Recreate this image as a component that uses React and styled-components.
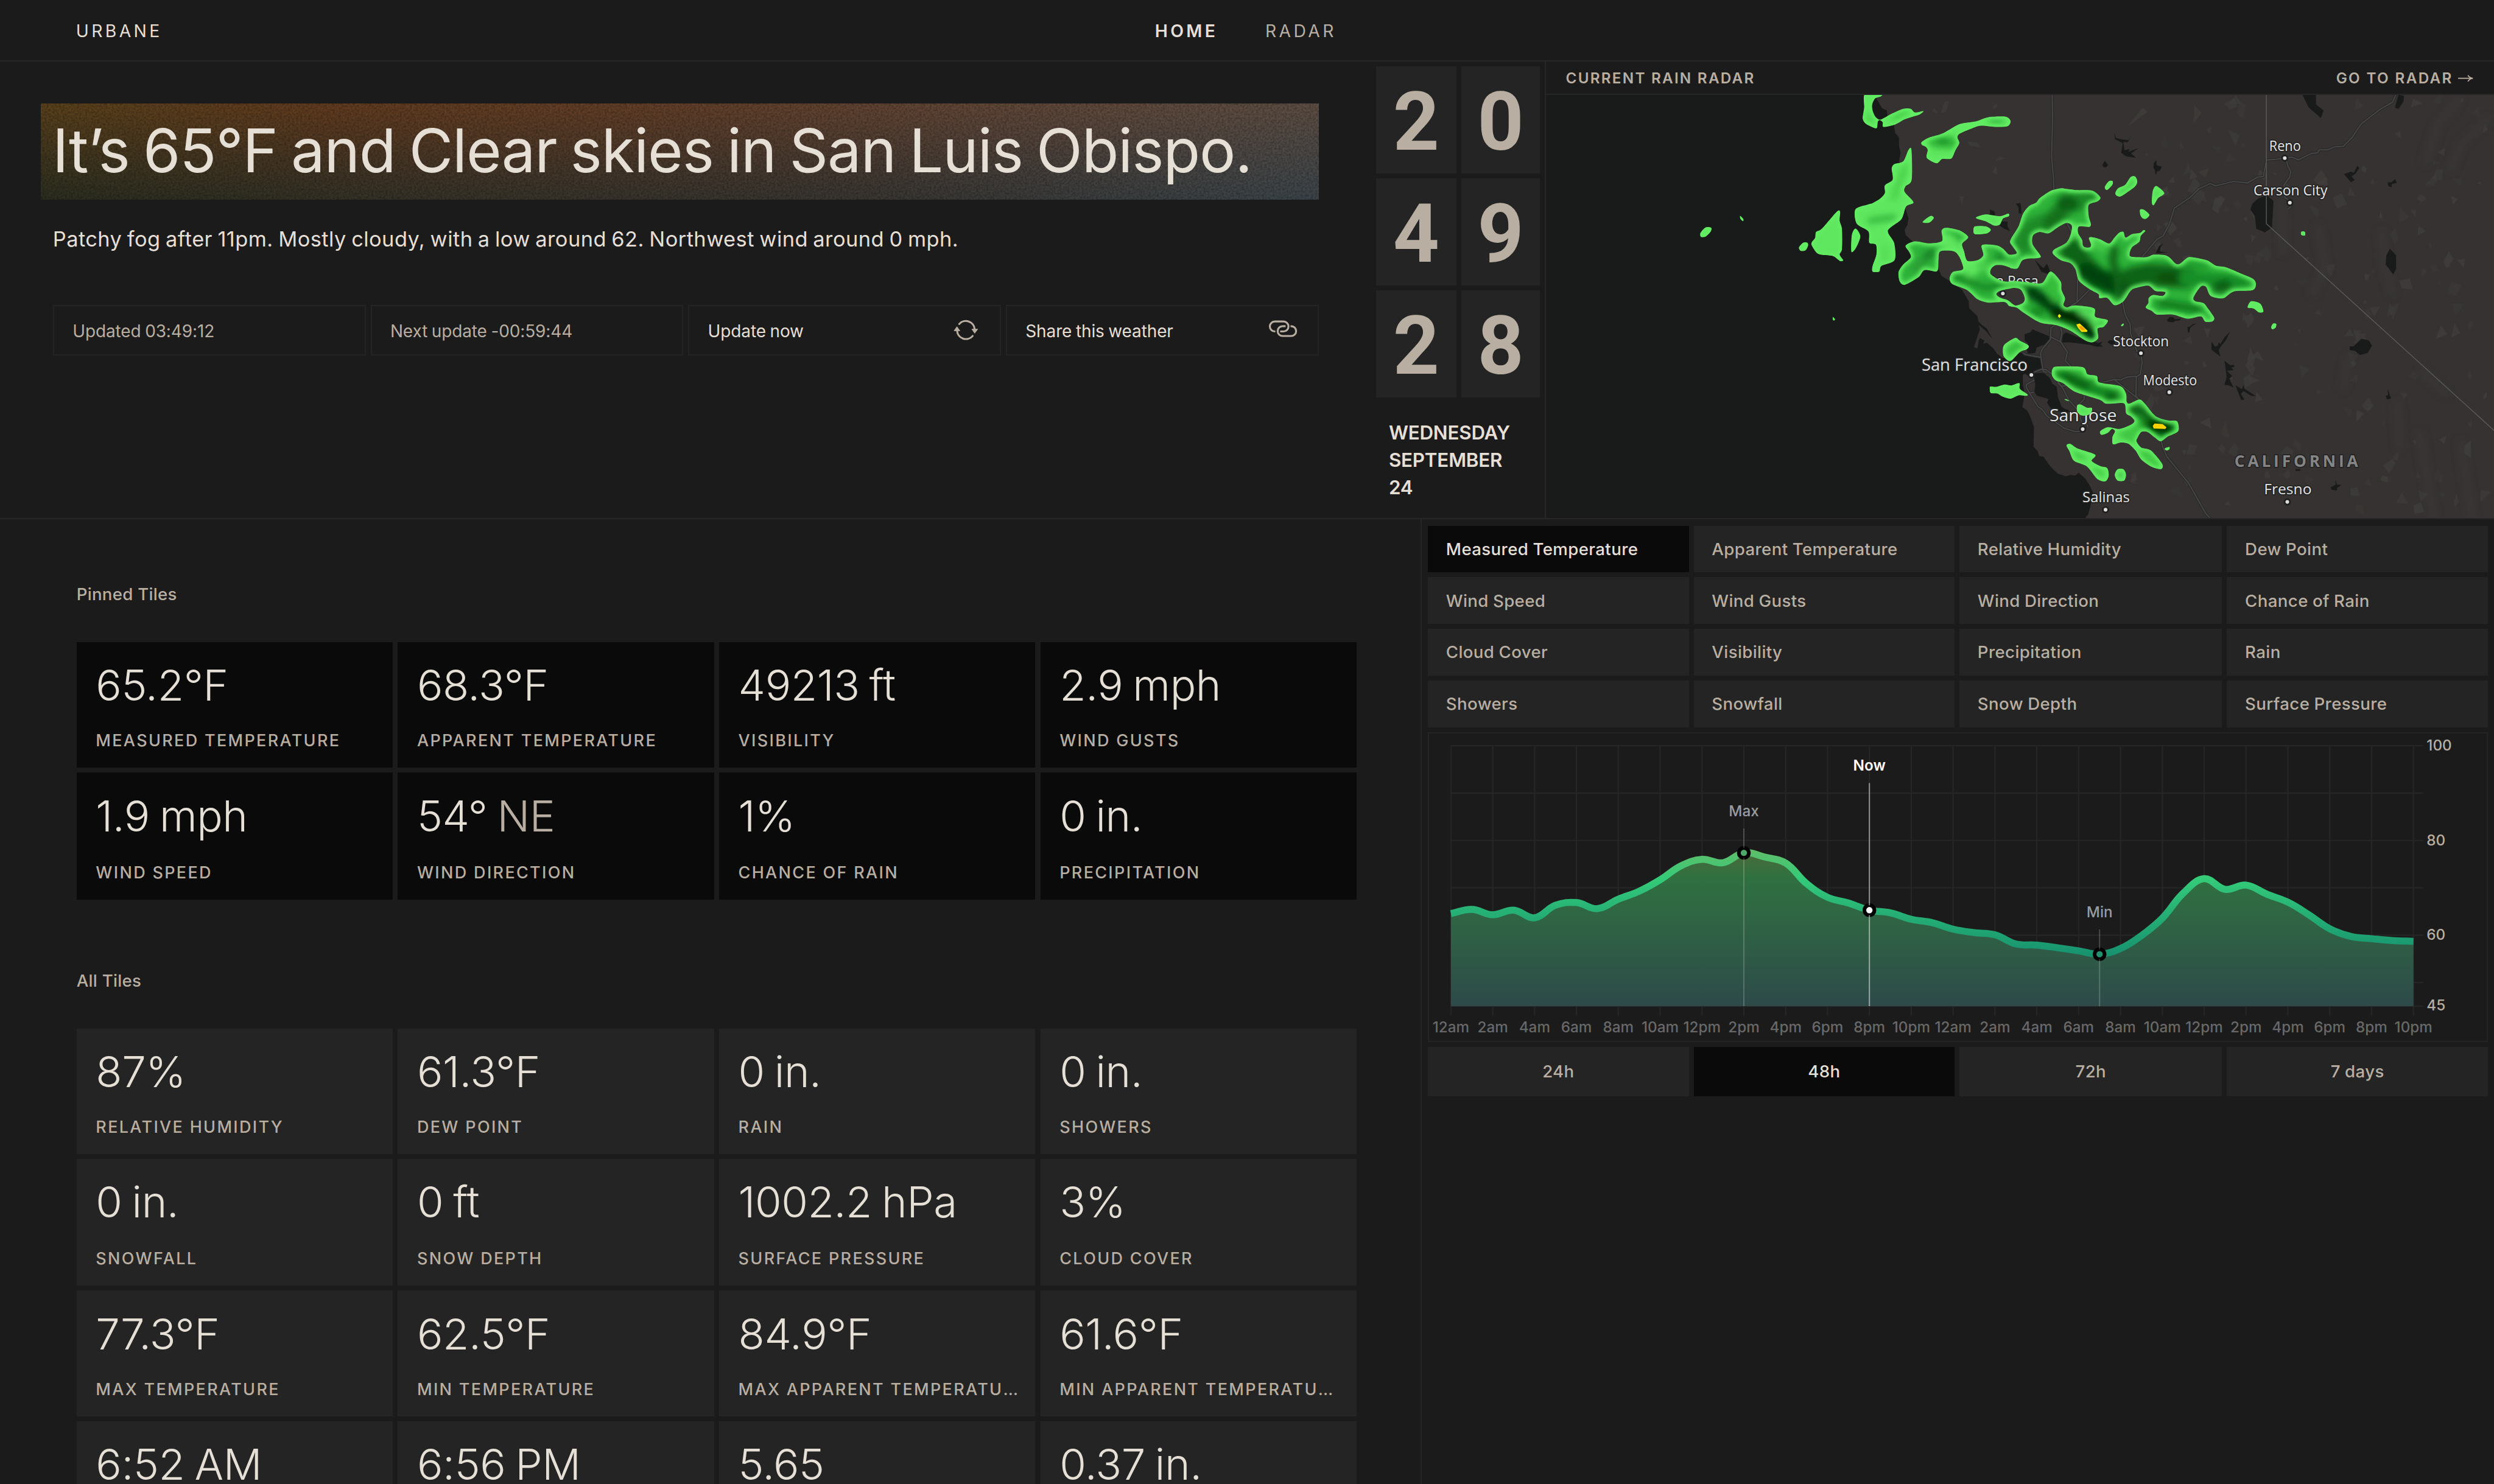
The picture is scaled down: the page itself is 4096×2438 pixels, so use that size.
import React from "react";
import styled, { createGlobalStyle } from "styled-components";

/* The design is drawn on a 6078px wide board; u() converts board units to page pixels. */
const u = (n) => `${Math.round(n * 0.673906 * 100) / 100}px`;

const color = {
  bg: "#1b1b1b",
  panel: "#242424",
  line: "#262626",
  ink: "#0a0a0a",
  text: "#e5dfd6",
  muted: "#b8aea1",
};

const GlobalStyle = createGlobalStyle`
  * { box-sizing: border-box; }
  html, body { margin: 0; background: ${color.bg}; }
  body {
    font-family: Inter, "Liberation Sans", sans-serif;
    color: ${color.text};
    overflow: hidden;
    -webkit-font-smoothing: antialiased;
  }
`;

const Page = styled.div`
  display: flex;
  flex-direction: column;
  height: 100vh;
  overflow: hidden;
  background: ${color.bg};
`;

/* ---------- Top bar ---------- */

const TopBar = styled.header`
  flex: none;
  height: ${u(150)};
  border-bottom: ${u(3.2)} solid ${color.line};
  padding: ${u(3)} 0 0 ${u(185)};
`;

const TopBarInner = styled.div`
  width: ${u(3072)};
  height: 100%;
  display: flex;
  align-items: center;
  justify-content: space-between;
`;

const Brand = styled.span`
  font-size: ${u(42)};
  letter-spacing: 0.156em;
`;

const Nav = styled.nav`
  display: flex;
  gap: ${u(115)};
`;

const NavLink = styled.a`
  font-size: ${u(42)};
  font-weight: ${(p) => (p.$active ? 600 : 400)};
  letter-spacing: 0.156em;
  color: ${(p) => (p.$active ? color.text : color.muted)};
`;

/* ---------- Hero row ---------- */

const TopRow = styled.section`
  flex: none;
  height: ${u(1116)};
  display: grid;
  grid-template-columns: ${u(3353.6)} ${u(411.4)} 1fr;
  border-bottom: ${u(3.2)} solid ${color.line};
`;

const Hero = styled.div`
  padding: ${u(102)} 0 0 ${u(98.7)};
`;

const Banner = styled.div`
  position: relative;
  width: ${u(3114.8)};
  height: ${u(234.3)};
  display: flex;
  align-items: center;
  padding: 0 0 ${u(5)} ${u(29)};
  background: linear-gradient(90deg, #2c2e20, #37332a 35%, #393632 65%, #3c454b);
  &::before {
    content: "";
    position: absolute;
    inset: 0;
    background: linear-gradient(90deg, #57401c, #603b1f 22%, #613e28 48%, #5f4638 75%, #5c4d43);
    mask-image: linear-gradient(180deg, #000 5%, rgba(0, 0, 0, 0.45) 55%, transparent);
  }
`;

const Grain = styled.svg`
  position: absolute;
  inset: 0;
  width: 100%;
  height: 100%;
  opacity: 0.36;
`;

const Title = styled.h1`
  position: relative;
  margin: 0;
  font-size: ${u(147)};
  font-weight: 400;
  line-height: 1.2;
  letter-spacing: -0.0105em;
  word-spacing: -0.048em;
  white-space: nowrap;
`;

const Summary = styled.p`
  margin: ${u(67)} 0 0 ${u(30)};
  font-size: ${u(51)};
  line-height: ${u(60)};
  letter-spacing: 0.0135em;
  word-spacing: -0.05em;
`;

const ActionRow = styled.div`
  width: ${u(3084.5)};
  margin: ${u(130.5)} 0 0 ${u(30.3)};
  display: grid;
  grid-template-columns: repeat(4, 1fr);
  gap: ${u(12)};
`;

const Action = styled.div`
  height: ${u(123)};
  border: ${u(3.2)} solid #242424;
  display: flex;
  align-items: center;
  justify-content: space-between;
  padding: ${u(3)} ${u(36)} 0 ${u(45)};
  font-size: ${u(41.5)};
  letter-spacing: -0.004em;
  word-spacing: -0.04em;
  color: ${(p) => (p.$clickable ? color.text : color.muted)};
  svg {
    flex: none;
    margin-top: ${u(-4)};
  }
`;

/* ---------- Clock ---------- */

const ClockColumn = styled.div`
  padding-top: ${u(11.7)};
`;

const ClockGrid = styled.div`
  display: grid;
  grid-template-columns: ${u(195.4)} ${u(192)};
  grid-auto-rows: ${u(261)};
  gap: ${u(12.1)};
`;

const Digit = styled.div`
  display: flex;
  align-items: center;
  justify-content: center;
  padding-top: ${u(13)};
  background: ${color.panel};
  color: ${color.muted};
  font-family: Roboto, Inter, sans-serif;
  font-weight: 700;
  font-size: ${u(197)};
  line-height: 1;
`;

const DateBlock = styled.div`
  margin: ${u(53.5)} 0 0 ${u(31)};
  font-size: ${u(46.5)};
  font-weight: 600;
  line-height: ${u(66.5)};
  letter-spacing: -0.006em;
`;

/* ---------- Radar panel ---------- */

const RadarPanel = styled.div`
  border-left: ${u(3.2)} solid ${color.line};
  display: flex;
  flex-direction: column;
  min-width: 0;
`;

const RadarHead = styled.div`
  flex: none;
  height: ${u(81)};
  border-bottom: ${u(3.2)} solid ${color.line};
  display: flex;
  align-items: center;
  justify-content: space-between;
  padding: ${u(3)} ${u(51)} 0 ${u(48)};
  font-size: ${u(36)};
  font-weight: 600;
  color: ${color.muted};
`;

const RadarHeading = styled.span`
  letter-spacing: 0.092em;
`;

const RadarLink = styled.a`
  display: flex;
  align-items: center;
  gap: ${u(12)};
  letter-spacing: 0.096em;
`;

const MapCanvas = styled.svg`
  display: block;
  width: 100%;
  flex: 1;
  min-height: 0;
  background: #191b1a;
`;

/* ---------- Lower area ---------- */

const LowerRow = styled.section`
  flex: 1;
  min-height: 0;
  display: grid;
  grid-template-columns: ${u(3462.5)} 1fr;
`;

const TilesColumn = styled.div`
  padding: ${u(153)} 0 0 ${u(186.5)};
  overflow: hidden;
`;

const SectionLabel = styled.h2`
  margin: ${(p) => (p.$spaced ? u(168) : 0)} 0 ${u(86.7)} 0;
  font-size: ${u(41)};
  font-weight: 500;
  line-height: ${u(60)};
  letter-spacing: 0.01em;
  color: ${color.muted};
`;

const TileGrid = styled.div`
  width: ${u(3119.8)};
  display: grid;
  grid-template-columns: repeat(4, 1fr);
  grid-template-rows: ${u(306)} ${u(309)};
  grid-auto-rows: ${u(306)};
  gap: ${u(12)};
`;

const Tile = styled.div`
  min-width: 0;
  display: flex;
  flex-direction: column;
  justify-content: space-between;
  padding: ${u(45)} ${u(42)} ${u(40.5)} ${u(47)};
  background: ${(p) => (p.$pinned ? color.ink : color.panel)};
`;

const TileValue = styled.div`
  font-size: ${u(105)};
  font-weight: 350;
  line-height: ${u(120)};
  letter-spacing: -0.006em;
  word-spacing: -0.05em;
  white-space: nowrap;
`;

const TileSuffix = styled.span`
  color: ${color.muted};
`;

const TileLabel = styled.div`
  font-size: ${u(40)};
  font-weight: 500;
  line-height: ${u(50)};
  letter-spacing: 0.087em;
  text-transform: uppercase;
  color: ${color.muted};
  white-space: nowrap;
  overflow: hidden;
  text-overflow: ellipsis;
`;

/* ---------- Chart column ---------- */

const ChartColumn = styled.div`
  border-left: ${u(3.2)} solid ${color.line};
  padding: ${u(15.4)} ${u(15)} 0 ${u(14.5)};
  display: flex;
  flex-direction: column;
  gap: ${u(12)};
`;

const TabGrid = styled.div`
  display: grid;
  grid-template-columns: 636fr 636fr 640fr 636fr;
  grid-auto-rows: ${(p) => u(p.$row)};
  gap: ${u(12)};
`;

const Tab = styled.button`
  border: 0;
  margin: 0;
  font-family: inherit;
  display: flex;
  align-items: center;
  justify-content: ${(p) => (p.$centered ? "center" : "flex-start")};
  padding: 0 ${(p) => (p.$centered ? 0 : u(44))} ${u(1)};
  font-size: ${u(41)};
  font-weight: 500;
  letter-spacing: 0.014em;
  word-spacing: -0.02em;
  background: ${(p) => (p.$active ? color.ink : color.panel)};
  color: ${(p) => (p.$active ? color.text : color.muted)};
`;

const ChartFrame = styled.div`
  height: ${u(755)};
  border: ${u(3.2)} solid ${color.panel};
`;

const ChartSvg = styled.svg`
  display: block;
  width: 100%;
  height: 100%;
`;

const AxisText = styled.text`
  font-size: ${(p) => p.$size || 36}px;
  font-weight: ${(p) => p.$weight || 500};
  fill: ${(p) => p.$fill};
  text-anchor: ${(p) => p.$anchor || "middle"};
`;

const CityText = styled.text`
  font-family: "Open Sans", "Noto Sans", sans-serif;
  font-size: ${(p) => p.$size || 34}px;
  font-weight: 400;
  fill: #e4e4e4;
  stroke: #232323;
  stroke-width: 5px;
  stroke-linejoin: round;
  paint-order: stroke;
`;

const StateText = styled(CityText)`
  font-weight: 700;
  fill: #858585;
`;

/* ---------- Icons ---------- */

const RefreshIcon = () => (
  <svg width={u(90)} height={u(90)} viewBox="0 0 270 270" fill="none">
    <g stroke={color.muted} strokeWidth="14" strokeLinecap="round">
      <path d="M82 90A65 65 0 0 1 195 130" />
      <path d="M180 178A65 65 0 0 1 66 138" />
    </g>
    <g fill={color.muted} stroke={color.muted} strokeWidth="4" strokeLinejoin="round">
      <path d="M174 128H217L195 158Z" />
      <path d="M44 140H87L65 110Z" />
    </g>
  </svg>
);

const LinkIcon = () => (
  <svg width={u(95)} height={u(95)} viewBox="0 0 285 285" fill="none">
    <g stroke={color.muted} strokeWidth="14">
      <path d="M87 153.500H83A36.250 36.250 0 0 1 83 81H147A36.250 36.250 0 0 1 147 153.500H122" />
      <path d="M162 115H140A36 36 0 0 0 140 187H203A36 36 0 0 0 203 115H198" />
    </g>
  </svg>
);

const ArrowIcon = () => (
  <svg width={u(37)} height={u(20)} viewBox="0 0 37 20" fill="none" stroke={color.muted} strokeWidth="2.600">
    <path d="M0 10H35M24 2.500C26.500 6.500 30 9 36 10C30 11 26.500 13.500 24 17.500" />
  </svg>
);

/* ---------- Map geometry ---------- */

/* Survey sheets: each sheet has its own origin and scale on the board. */
const sheet = (ox, oy, sx, sy) => (s) =>
  s.trim().split(/\s+/).map((p) => {
    const [x, y] = p.split(",").map(Number);
    return [ox + x / sx, oy + y / sy];
  });
const W = sheet(4300, 200, 1.7422, 1.4519);
const E = sheet(5100, 150, 1.6033, 1.3876);
const C = sheet(4850, 400, 2.3059, 2.3059);
const S = sheet(3300, 0, 1.12, 1.2062);

const f = (n) => n.toFixed(1);
const line = (pts) => "M" + pts.map((p) => `${f(p[0])} ${f(p[1])}`).join("L");
const shape = (pts) => line(pts) + "Z";
const smooth = (pts) => {
  const n = pts.length;
  const k = 0.14;
  let d = `M${f(pts[0][0])} ${f(pts[0][1])}`;
  for (let i = 0; i < n; i++) {
    const a = pts[(i - 1 + n) % n];
    const b = pts[i];
    const c = pts[(i + 1) % n];
    const e = pts[(i + 2) % n];
    d += `C${f(b[0] + (c[0] - a[0]) * k)} ${f(b[1] + (c[1] - a[1]) * k)} ${f(c[0] - (e[0] - b[0]) * k)} ${f(c[1] - (e[1] - b[1]) * k)} ${f(c[0])} ${f(c[1])}`;
  }
  return d + "Z";
};

const LAND = shape([
  ...W("475,40 478,60 500,92 520,100 525,125 550,150 556,180 572,195 572,225 579,250 572,280 590,320 600,450 612,480 608,505 596,522 600,540 628,562 700,600 740,660 752,685 790,705 840,735 868,775 870,800 905,828 915,875 890,938 905,942 912,910 930,925 945,922 970,940 990,962 1010,975 1040,978 1085,985 1120,1030 1098,1035 1098,1070 1106,1100 1096,1150 1114,1160 1125,1175 1145,1220 1143,1290 1160,1305 1168,1323 1185,1325 1215,1360 1245,1385 1280,1395 1300,1390 1320,1392 1335,1382 1362,1402 1380,1425 1397,1455 1385,1500 1375,1530 1360,1545 1320,1560"),
  [6100, 1290], [6100, 200],
]);

const WATER = [
  C("195,955 225,945 240,928 265,940 330,965 340,985 310,1012 262,1030 255,1060 215,1065 205,1040 215,1010 195,990"),
  C("175,1060 230,1072 280,1085 290,1110 302,1155 260,1170 240,1185 205,1185 190,1140 165,1105 120,1100 110,1060"),
  C("252,1175 300,1172 335,1200 352,1235 375,1250 382,1310 402,1360 420,1375 445,1382 440,1395 400,1392 345,1375 320,1340 330,1320 262,1300 250,1280 255,1240 248,1210"),
  C("410,960 425,945 455,955 500,975 560,990 610,1005 635,995 620,1012 635,1025 600,1025 560,1015 480,1005 440,1000 405,1002"),
  C("660,1000 672,988 700,992 705,1010 680,1015"),
  C("145,222 172,218 178,278 162,275 160,240"),
  C("0,255 25,265 30,285 0,290"),
  C("60,320 100,322 98,345 112,375 80,362 55,345"),
  C("252,538 300,585 320,560 338,600 325,615 290,605"),
  C("632,5 645,0 665,5 650,18"),
  C("922,0 935,15 965,15 955,35 938,40 930,58 928,35 918,15"),
  C("932,500 950,460 975,445 960,465 955,490 1000,496 950,500"),
  C("995,875 1010,858 1030,860 1040,872 1075,868 1065,878 1040,880 1030,888 1000,885"),
  C("1110,915 1125,912 1140,898 1162,895 1140,905 1125,920 1120,948 1112,942"),
  C("1245,998 1265,1025 1282,1018 1285,1000 1295,1010 1320,970 1350,940 1325,990 1300,1020 1285,1045 1296,1082 1245,1042"),
  C("1318,1105 1350,1130 1370,1128 1375,1138 1355,1142 1370,1158 1330,1160 1362,1190 1345,1205 1368,1255 1345,1243 1318,1240 1330,1195 1325,1155"),
  C("1380,1242 1415,1265 1425,1240 1430,1262 1495,1302 1470,1302 1425,1275 1410,1290 1430,1322 1412,1326"),
  W("905,843 925,860 945,872 968,908 940,880 912,860"),
  W("915,905 935,915 930,925 908,925"),
  E("648,462 680,452 707,470 705,500 701,560 674,578 640,565 634,522 617,500 625,480"),
  E("820,112 873,112 873,145 903,165 892,190 845,155"),
  E("1195,112 1217,115 1215,135 1195,160 1182,155"),
  E("1162,632 1186,655 1186,700 1175,720 1145,685 1148,655"),
  E("1005,963 1020,963 1050,937 1080,943 1092,960 1075,985 1045,992 1025,978 1005,975"),
  E("982,380 1010,372 1020,376 1035,352 1042,360 1028,378 1012,388 1024,400 1010,408 990,388"),
  E("1153,408 1168,408 1182,397 1189,410 1170,413 1168,425 1155,420"),
  E("1145,1130 1155,1128 1153,1105 1166,1140 1150,1142"),
  E("85,240 92,258 110,262 140,265 150,250 138,272 120,272 125,300 145,295 140,305 180,292 150,310 170,325 130,320 112,308 118,275 88,262"),
  E("38,350 48,335 60,348 45,358"),
  E("238,345 250,332 250,350 270,355 255,365 248,382 245,360"),
  E("930,1440 950,1430 948,1415 955,1430 972,1432 955,1442 955,1450 935,1448"),
  E("793,1378 812,1378 812,1384 793,1384"),
];

const ROADS = [
  W("1222,40 1224,120 1220,265 1228,340 1230,390"),
  C("430,325 455,375 460,395"),
  C("492,640 490,775 440,805"),
  C("562,702 490,775"),
  C("745,770 760,845 788,900 790,950 825,1050 848,1062 855,1115 845,1180 822,1195 820,1305 845,1330"),
  C("822,1192 770,1196 735,1212 700,1210 640,1224"),
  C("700,1212 838,1322"),
  C("360,908 343,920 340,985 295,1038 284,1062 290,1105 300,1165 320,1170"),
  C("185,1060 200,1070 285,1085"),
  C("398,920 405,948 395,995 435,1055 424,1105 462,1145"),
  C("340,970 395,997"),
  C("245,1170 290,1152 315,1155 350,1180 410,1260 440,1320 500,1390 515,1450 520,1475"),
  C("380,1230 400,1246 430,1245"),
  C("250,1212 205,1238 205,1255 225,1290 270,1362 295,1380 320,1415 420,1485 480,1503 510,1500"),
  C("225,1285 248,1282"),
  C("530,1300 530,1320 500,1350"),
  C("528,1420 552,1480"),
  E("192,662 252,600 275,590 300,550 320,495 380,460 415,430 460,412 480,420 550,405 605,410 645,390 668,388 672,365 680,332 720,330 750,325 780,323 805,332 855,310 880,308 885,298 920,298 945,288 980,286 1015,255 1050,210 1125,160 1172,137 1187,108"),
  E("757,330 762,350 775,372 770,390 748,418 752,460 772,470 775,490 765,498"),
  E("266,1275 275,1305 290,1335 375,1425 440,1525 465,1550"),
];

const CELLS = [
  {
    outer: [
      ...W("600,578 640,563 700,570 755,562 753,525 772,515 828,524 866,548 840,572 848,598 862,632 905,630 930,612 922,580 940,574 990,578 1015,590 1040,610 1072,605 1058,585"),
      ...C("113,440 120,415 160,350 185,280 220,235 260,215 280,190 340,150 400,135 430,138 490,145 575,148 620,185 605,208 555,228 555,290 567,335 558,352 500,350 495,385 518,425 522,455 535,467 562,467 568,450 556,415 575,410 620,422 670,445 700,412 725,385 750,380 762,412 800,392 845,385 862,370 873,375 848,402 840,435 800,465 785,500 795,520 880,522 920,508 980,510 1010,525 1045,560 1070,558 1110,525 1140,523 1220,540 1270,570 1330,580 1420,618 1480,645 1495,675 1475,708 1370,715 1310,753 1240,740 1215,690 1190,684 1165,712 1143,752 1155,770 1200,780 1225,810 1260,862 1250,883 1210,885 1185,855 1110,868 1030,845 940,845 910,825 875,805 890,780 892,752 915,735 970,740 985,718 930,712 890,682 820,695 790,712 750,770 700,792 660,752 615,752 610,730 560,702 500,655 480,590 450,555 400,540 355,505 360,480 430,440 455,390 460,345 430,330 380,355 330,388 280,380 242,400 240,450 285,515 270,527 215,530 180,542 155,585 120,585"),
      ...W("1040,655 1015,648 980,648 962,662 962,680 1000,700 1030,706 1060,703 1120,708 1180,710 1215,670 1258,705 1262,735 1277,765 1270,788 1285,797 1320,790 1400,800 1405,830 1458,842 1442,865 1415,872 1418,905 1395,920 1365,915 1300,880 1240,860 1170,850 1100,815 1072,798 1040,792 1020,778 950,780 905,768 860,735 800,715 787,695 800,672 838,665 845,655 830,620 805,598 748,598 740,625 738,660 728,670 680,665 655,690 597,717 575,705 570,672 590,645 622,620 615,600"),
    ],
    hole: W("985,750 1002,738 1060,728 1090,735 1106,765 1097,782 1065,790 1035,772 1000,762"),
    tone: "#2fb33a",
    edge: 13,
    cores: [
      [C("190,450 200,400 250,350 340,320 430,230 580,185"), 46, "#1a8a26"],
      [C("330,330 400,270 430,200"), 30, "#13701c"],
      [C("415,215 460,222"), 34, "#0e5f15"],
      [C("455,480 520,560 600,640 720,680 800,640 900,620 1100,635"), 54, "#0d6417"],
      [C("540,600 620,640 720,690"), 42, "#04430a"],
      [C("700,480 690,540 720,640 725,740"), 20, "#0d6417"],
      [C("970,640 1100,640"), 26, "#095010"],
      [C("1100,640 1250,650 1420,665"), 34, "#178f27"],
      [C("1285,690 1325,680"), 30, "#0c6014"],
      [C("1080,560 1200,570"), 24, "#239f2e"],
      [C("960,780 1080,800 1170,815"), 20, "#117a1d"],
      [W("700,610 640,660"), 20, "#2a9c35"],
      [W("690,615 712,605"), 20, "#138026"],
      [W("995,618 1010,625"), 16, "#0f7a20"],
      [W("815,690 880,708 935,728 1000,720 1150,718"), 14, "#128424"],
      [W("770,560 830,610 880,660"), 40, "#5ee55d"],
      [W("930,600 930,660 1080,640"), 16, "#4ed24d"],
      [C("560,430 640,470"), 14, "#4fd54e"],
      [C("470,350 470,390"), 16, "#57de56"],
      [C("235,720 310,770 400,840 500,880 570,960"), 30, "#063e0a"],
      [C("370,840 500,860 560,930"), 22, "#022404"],
      [C("250,830 280,830"), 24, "#138a22"],
      [C("345,650 370,740"), 30, "#35bd3b"],
      [C("520,830 585,850 600,900"), 16, "#5fe75f"],
      [C("620,885 635,885"), 10, "#2ea838"],
    ],
  },
  {
    outer: [
      ...C("347,1170 352,1150 375,1137 520,1140 548,1180 600,1190 608,1222 640,1232 735,1248 765,1290 768,1335 785,1345 840,1322 870,1345 930,1415 1000,1440 1052,1445 1058,1500 1000,1530 960,1557 925,1535 885,1505 850,1505 828,1540"),
      ...E("172,1285 190,1305 228,1315 272,1360 268,1378 230,1370 190,1345 168,1315 140,1292 110,1288 80,1294 78,1270 88,1250 75,1242 60,1255 35,1262 30,1250 60,1236 105,1242 150,1228 164,1215 150,1200"),
      ...C("765,1400 755,1345 690,1345 650,1345 620,1325 540,1300 470,1275 410,1230 370,1215 350,1190"),
    ],
    tone: "#3cc440",
    edge: 13,
    cores: [
      [C("400,1185 540,1245 690,1305"), 34, "#178a24"],
      [C("430,1195 540,1245"), 20, "#0c6016"],
      [C("670,1300 700,1305"), 20, "#0c6016"],
      [C("810,1380 860,1392"), 26, "#0c6016"],
      [C("900,1440 960,1480 990,1490"), 44, "#0d7019"],
      [C("925,1465 985,1480"), 32, "#032d06"],
      [E("150,1250 140,1290 250,1350"), 12, "#4acc48"],
      [E("100,1270 80,1275"), 20, "#62e861"],
    ],
  },
  { outer: W("428,40 500,40 495,50 470,58 458,80 460,100 470,120 482,130 498,131 540,112 590,94 622,94 640,107 676,102 660,114 630,122 595,132 555,150 506,158 503,142 490,134 482,140 478,162 462,160 430,146 418,128 424,90"), cores: [[W("435,125 455,130"), 14, "#49cd49"], [W("550,125 600,108"), 12, "#3fc540"]] },
  { outer: W("668,212 700,196 760,180 830,148 900,138 950,124 1025,122 1046,138 1032,156 980,158 920,154 880,164 830,182 820,195 828,215 812,240 794,270 755,272 732,287 690,268 694,240 685,228 670,222"), cores: [[W("720,210 800,215"), 30, "#35bb3b"], [W("745,208 775,210"), 16, "#159028"], [W("960,138 1010,140"), 9, "#1d9a2e"]] },
  { outer: W("612,240 625,240 626,345 600,368 596,388 634,425 602,440 582,485 525,525 552,570 553,630 498,650 488,670 460,670 460,650 476,610 474,575 446,568 442,528 392,500 387,450 440,433 460,428 492,412 512,392 512,365 545,345 541,305 552,290 590,280"), cores: [[W("450,490 550,478"), 12, "#2fae38"], [W("550,410 575,350 600,300"), 14, "#48ce48"], [W("510,590 515,630"), 18, "#57dc55"]] },
  { outer: W("308,458 322,458 320,490 330,520 330,590 320,610 335,630 322,633 290,615 230,608 202,578 202,566 216,550 220,530 245,518"), cores: [] },
  { outer: W("147,585 165,568 183,568 186,578 175,595 155,597"), cores: [] },
  { outer: W("372,540 388,518 408,545 390,585 370,600"), cores: [] },
  { outer: W("291,831 300,838 298,843 292,842"), cores: [] },
  { outer: S("946,684 960,668 975,669 974,680 960,695 947,696"), cores: [] },
  { outer: S("1054,634 1063,644 1062,650 1055,643"), cores: [] },
  { outer: W("672,495 705,473 720,480 700,497"), cores: [] },
  { outer: W("898,480 940,468 1000,474 1036,465 1038,474 1014,482 1000,504 975,507 940,492"), cores: [[W("930,485 985,490"), 8, "#4fd34e"]] },
  { outer: W("888,525 895,510 940,510 962,522 945,535 895,538"), cores: [[W("905,525 930,522"), 8, "#4fd34e"]] },
  { outer: W("1013,950 1020,928 1065,905 1085,915 1122,932 1115,945 1085,955 1045,987 1018,972"), cores: [[W("1045,950 1080,930"), 30, "#38bd3c"]] },
  { outer: W("957,1085 960,1077 985,1078 1020,1070 1050,1073 1083,1065 1085,1085 1118,1105 1110,1110 1080,1108 1045,1120 1010,1112 990,1102 962,1100"), cores: [] },
  { outer: C("490,1355 510,1350 545,1368 573,1370 570,1395 550,1410 515,1412 490,1390"), cores: [[C("520,1385 545,1390"), 10, "#4bd04b"]] },
  { outer: W("1283,1285 1300,1280 1330,1296 1405,1318 1390,1340 1425,1358 1455,1365 1463,1390 1450,1412 1415,1405 1370,1360 1315,1340 1295,1305"), cores: [[W("1320,1315 1350,1330"), 14, "#41c542"], [W("1400,1375 1435,1385"), 14, "#41c542"]] },
  { outer: W("1488,1390 1500,1370 1525,1370 1536,1388 1528,1410 1500,1410"), cores: [[W("1508,1390 1516,1390"), 12, "#2aa336"]] },
  { outer: C("418,1322 430,1320 447,1332 430,1328"), cores: [] },
  { outer: E("815,575 830,575 830,588 815,586"), cores: [] },
  { outer: E("282,1308 300,1303 300,1311 290,1315 284,1313"), cores: [] },
  { outer: E("698,898 705,886 718,887 715,900 702,905"), cores: [] },
  { outer: E("111,892 120,885 122,890 115,895"), cores: [] },
  { outer: E("606,828 620,810 655,818 668,845 650,848 630,835 610,833"), cores: [] },
  { outer: C("645,128 668,95 690,95 688,115 658,145"), cores: [[C("655,130 680,105"), 6, "#35b93b"]] },
  { outer: C("705,160 720,135 760,115 790,72 815,68 828,95 815,125 760,165 730,182 710,175"), cores: [[C("735,155 775,130 805,95"), 12, "#35b93b"]] },
  { outer: C("935,122 980,162 945,190 920,230 910,215 915,150"), cores: [[C("930,150 928,190"), 10, "#45c845"]] },
  { outer: C("843,255 865,255 896,283 880,305 860,305 845,285"), cores: [] },
];

const HOT_SPOTS = [
  [C("485,900 505,895 548,935 545,942 515,942 495,920"), "#ffe000"],
  [C("500,912 512,908 534,928 530,934 514,933"), "#ff9a00"],
  [C("381,852 390,841 400,852 390,865"), "#f4f500"],
  [C("915,1470 925,1457 970,1460 992,1478 985,1488 920,1485"), "#ffd200"],
];

const CITIES = [
  ["Reno", 5530.4, 366.9, 77.3, 34, E("751,326")],
  ["Carson City", 5492.3, 476.5, 180.3, 34, E("771,477")],
  ["Stockton", 5150, 843.3, 136, 34, E("189,986")],
  ["Modesto", 5222.9, 939, 131.6, 34, E("300,1118")],
  ["Fresno", 5517.9, 1204.3, 116, 34, E("761,1489")],
  ["Salinas", 5075.4, 1224.2, 115.4, 34, W("1449,1513")],
  ["San Francisco", 4683.4, 902.5, 258.3, 40, W("1134,1036")],
  ["San Jose", 4995, 1025.8, 164, 40, W("1352,1228")],
  ["Santa Rosa", 4796, 696.7, 172, 34, W("1013,748")],
];

/* Deterministic scatter of faint hillside facets. */
const FACETS = (() => {
  let s = 7;
  const rnd = () => {
    s = (s * 16807) % 2147483647;
    return s / 2147483647;
  };
  const out = [];
  for (let i = 0; i < 190; i++) {
    const x = 5200 + rnd() * 860;
    const y = 240 + rnd() * 1010;
    const r = 6 + rnd() * 13;
    const n = rnd() > 0.5 ? 4 : 3;
    const a0 = rnd() * 6.28;
    const pts = [];
    for (let j = 0; j < n; j++) {
      const a = a0 + (j * 6.28) / n + rnd() * 0.7;
      const q = r * (0.5 + rnd() * 0.7);
      pts.push([x + Math.cos(a) * q, y + Math.sin(a) * q * 1.25]);
    }
    out.push([pts, 0.25 + rnd() * 0.6]);
  }
  return out;
})();

const RIDGES = [
  E("1300,340 1350,210 1430,130"),
  E("1400,360 1440,280 1540,200"),
  E("1130,580 1140,690 1170,780"),
  E("880,560 910,700 860,780"),
  E("740,480 745,640"),
  E("1290,1050 1380,1120"),
  E("1190,1160 1200,1300"),
  E("1280,1260 1330,1540"),
  E("1440,1290 1480,1540"),
  E("1000,1000 980,1100"),
];

const LAKES_AND_LAND = (
  <g>
    <path d={LAND} fill="#353231" />
    <g fill="none" stroke="#3a3937" strokeWidth="22" strokeLinecap="round" filter="url(#ridgeBlur)" opacity="0.6">
      {RIDGES.map((r, i) => <path key={i} d={line(r)} />)}
    </g>
    {FACETS.map(([pts, o], i) => <path key={i} d={shape(pts)} fill="#403e3c" opacity={o} />)}
    <g fill="#403e3c" opacity="0.7">
      <path d={shape(W("713,105 722,90 738,110"))} />
      <path d={shape(W("765,68 785,66 772,105 750,108"))} />
      <path d={shape(W("968,90 985,74 990,85 975,96"))} />
      <path d={shape(W("862,210 905,213 918,230 875,225"))} />
      <path d={shape(W("978,280 1000,262 1028,270 1000,275"))} />
      <path d={shape(W("968,318 985,295 990,328"))} />
      <path d={shape(W("830,405 848,405 839,433"))} />
      <path d={shape(E("133,222 195,155 215,170"))} />
    </g>
    <g fill="#191b1a">
      {WATER.map((w, i) => <path key={i} d={shape(w)} />)}
    </g>
  </g>
);

const RadarMap = () => (
  <MapCanvas viewBox="3768 231 2310 1032" preserveAspectRatio="none">
    <defs>
      <filter id="ridgeBlur" filterUnits="userSpaceOnUse" x="5000" y="200" width="1100" height="1100"><feGaussianBlur stdDeviation="8" /></filter>
      <filter id="coreBlur" filterUnits="userSpaceOnUse" x="4100" y="200" width="1500" height="1100"><feGaussianBlur stdDeviation="8" /></filter>
      <filter id="edgeBlur" filterUnits="userSpaceOnUse" x="4100" y="200" width="1500" height="1100"><feGaussianBlur stdDeviation="4.500" /></filter>
      {CELLS.map((c, i) => (
        <clipPath key={i} id={`cell${i}`}>
          <path clipRule="evenodd" d={smooth(c.outer) + (c.hole ? smooth(c.hole) : "")} />
        </clipPath>
      ))}
    </defs>
    {LAKES_AND_LAND}
    <g fill="none" strokeLinejoin="round">
      {ROADS.map((r, i) => <path key={i} d={line(r)} stroke="#292929" strokeWidth="6.500" />)}
      {ROADS.map((r, i) => <path key={i} d={line(r)} stroke="#474747" strokeWidth="2.800" />)}
      <path d={line(E("679,108 679,548 1575,1252"))} stroke="#5c5c5b" strokeWidth="2" />
    </g>
    {CITIES.map(([name, x, y, w, size, [dot]]) => (
      <g key={name}>
        <CityText x={x} y={y} $size={size} textLength={w} lengthAdjust="spacingAndGlyphs">{name}</CityText>
        <circle cx={dot[0]} cy={dot[1]} r="6.500" fill="#dcdcdc" stroke="#1e1e1e" strokeWidth="4" />
      </g>
    ))}
    <StateText $size={39} x="5446" y="1137.300" textLength="301" lengthAdjust="spacing">CALIFORNIA</StateText>
    {CELLS.map((c, i) => {
      const d = smooth(c.outer) + (c.hole ? smooth(c.hole) : "");
      return (
        <g key={i} clipPath={`url(#cell${i})`}>
          <path d={d} fillRule="evenodd" fill={c.tone || "#5fe75f"} />
          <g filter="url(#coreBlur)" fill="none" strokeLinecap="round" strokeLinejoin="round">
            {c.cores.map(([pts, w, fill], j) => <path key={j} d={line(pts)} stroke={fill} strokeWidth={w} />)}
          </g>
          <path d={d} fill="none" stroke="#63ee64" strokeWidth={c.edge || 10} filter="url(#edgeBlur)" />
        </g>
      );
    })}
    {HOT_SPOTS.map(([pts, fill], i) => <path key={i} d={shape(pts)} fill={fill} />)}
  </MapCanvas>
);

/* ---------- Chart ---------- */

const HOUR = 50.99;
const X0 = 3536.4;
const LEVELS = [
  1057, 1046, 1060, 1048, 1068, 1035, 1028, 1044, 1019, 998, 968, 931, 914, 923, 897, 908, 924, 978, 1014, 1029, 1048,
  1055, 1072, 1081, 1098, 1107, 1113, 1137, 1140, 1147, 1155, 1164, 1149, 1115, 1069, 1003, 965, 993, 982, 1006, 1027,
  1060, 1097, 1117, 1123, 1128, 1130,
].map((v) => 1250 + v / 1.0814);

const curve = (() => {
  const p = LEVELS.map((y, i) => [X0 + i * HOUR, y]);
  const cp = p.map((c, i) => {
    const a = p[Math.max(0, i - 1)];
    const b = p[Math.min(p.length - 1, i + 1)];
    const d1 = Math.hypot(c[0] - a[0], c[1] - a[1]);
    const d2 = Math.hypot(b[0] - c[0], b[1] - c[1]);
    const t = 0.4 / (d1 + d2);
    return {
      in: [c[0] - t * d1 * (b[0] - a[0]), c[1] - t * d1 * (b[1] - a[1])],
      out: [c[0] + t * d2 * (b[0] - a[0]), c[1] + t * d2 * (b[1] - a[1])],
    };
  });
  let d = `M${f(p[0][0])} ${f(p[0][1])}`;
  for (let i = 1; i < p.length; i++) {
    d += `C${f(cp[i - 1].out[0])} ${f(cp[i - 1].out[1])} ${f(cp[i].in[0])} ${f(cp[i].in[1])} ${f(p[i][0])} ${f(p[i][1])}`;
  }
  return d;
})();

const HOURS = ["12am", "2am", "4am", "6am", "8am", "10am", "12pm", "2pm", "4pm", "6pm", "8pm", "10pm"];
const ROWS = [1818.2, 1933.8, 2049.2, 2164.6, 2280, 2395.5, 2453];
const SCALE = [["100", 1829.8], ["80", 2061], ["60", 2291.3], ["45", 2463.3]];

const Marker = ({ hour, label, top, textY, lineColor, fill, textFill, weight }) => {
  const x = X0 + hour * HOUR;
  return (
    <g>
      <AxisText x={x} y={textY} $fill={textFill} $weight={weight}>{label}</AxisText>
      <circle cx={x} cy={LEVELS[hour]} r="12.200" fill={fill} stroke="#000" strokeWidth="9" />
      <line x1={x} x2={x} y1={top} y2={LEVELS[hour] - 12} stroke={lineColor} strokeWidth="3" />
      <line x1={x} x2={x} y1={LEVELS[hour] + 12} y2="2453" stroke={lineColor} strokeWidth="3" />
    </g>
  );
};

const TemperatureChart = () => (
  <ChartSvg viewBox="3483.200 1788.600 2576.800 748.600" preserveAspectRatio="none">
    <defs>
      <linearGradient id="tempLine" gradientUnits="userSpaceOnUse" x1="0" x2="0" y1="2072" y2="2330">
        <stop offset="0" stopColor="#60bd69" />
        <stop offset="0.270" stopColor="#34cb79" />
        <stop offset="0.600" stopColor="#26b075" />
        <stop offset="1" stopColor="#17926f" />
      </linearGradient>
      <linearGradient id="tempFill" gradientUnits="userSpaceOnUse" x1="0" x2="0" y1="2072" y2="2453">
        <stop offset="0" stopColor="#4d6b3b" />
        <stop offset="0.180" stopColor="#2f7040" />
        <stop offset="0.550" stopColor="#2f6045" />
        <stop offset="1" stopColor="#2d4a49" />
      </linearGradient>
    </defs>
    <g stroke="#262626" strokeWidth="3.200">
      {ROWS.map((y) => <line key={y} x1={X0} x2="5906" y1={y} y2={y} />)}
      {Array.from({ length: 24 }, (_, i) => (
        <line key={i} x1={X0 + i * HOUR * 2} x2={X0 + i * HOUR * 2} y1="1818.200" y2="2476" />
      ))}
    </g>
    <path d={`${curve}V2453H${X0}Z`} fill="url(#tempFill)" />
    <path d={curve} fill="none" stroke="url(#tempLine)" strokeWidth="17" />
    {Array.from({ length: 24 }, (_, i) => (
      <AxisText key={i} x={X0 + i * HOUR * 2} y="2517.400" $fill="#686868">{HOURS[i % 12]}</AxisText>
    ))}
    {SCALE.map(([t, y]) => (
      <AxisText key={t} x="5914" y={y} $anchor="start" $fill={color.muted}>{t}</AxisText>
    ))}
    <Marker hour={14} label="Max" top={2020} textY={1990.2} lineColor="rgba(255,255,255,.2)" fill="#4aa968" textFill="#9b9b9b" weight={500} />
    <Marker hour={20} label="Now" top={1909.3} textY={1879.2} lineColor="rgba(255,255,255,.5)" fill="#fff" textFill="#fff" weight={600} />
    <Marker hour={31} label="Min" top={2266} textY={2236.6} lineColor="rgba(255,255,255,.2)" fill="#22916f" textFill="#9b9b9b" weight={500} />
  </ChartSvg>
);

/* ---------- Data ---------- */

const PINNED = [
  ["65.2°F", "Measured Temperature"],
  ["68.3°F", "Apparent Temperature"],
  ["49213 ft", "Visibility"],
  ["2.9 mph", "Wind Gusts"],
  ["1.9 mph", "Wind Speed"],
  ["54°", "Wind Direction", "NE"],
  ["1%", "Chance of Rain"],
  ["0 in.", "Precipitation"],
];

const ALL = [
  ["87%", "Relative Humidity"],
  ["61.3°F", "Dew Point"],
  ["0 in.", "Rain"],
  ["0 in.", "Showers"],
  ["0 in.", "Snowfall"],
  ["0 ft", "Snow Depth"],
  ["1002.2 hPa", "Surface Pressure"],
  ["3%", "Cloud Cover"],
  ["77.3°F", "Max Temperature"],
  ["62.5°F", "Min Temperature"],
  ["84.9°F", "Max Apparent Temperature"],
  ["61.6°F", "Min Apparent Temperature"],
  ["6:52 AM"],
  ["6:56 PM"],
  ["5.65"],
  ["0.37 in."],
];

const METRICS = [
  "Measured Temperature", "Apparent Temperature", "Relative Humidity", "Dew Point",
  "Wind Speed", "Wind Gusts", "Wind Direction", "Chance of Rain",
  "Cloud Cover", "Visibility", "Precipitation", "Rain",
  "Showers", "Snowfall", "Snow Depth", "Surface Pressure",
];

const Tiles = ({ items, pinned }) => (
  <TileGrid>
    {items.map(([value, label, suffix], i) => (
      <Tile key={i} $pinned={pinned}>
        <TileValue>{value}{suffix && <TileSuffix> {suffix}</TileSuffix>}</TileValue>
        {label && <TileLabel>{label}</TileLabel>}
      </Tile>
    ))}
  </TileGrid>
);

export default function App() {
  return (
    <Page>
      <GlobalStyle />
      <TopBar>
        <TopBarInner>
          <Brand>URBANE</Brand>
          <Nav>
            <NavLink $active>HOME</NavLink>
            <NavLink>RADAR</NavLink>
          </Nav>
        </TopBarInner>
      </TopBar>

      <TopRow>
        <Hero>
          <Banner>
            <Grain>
              <filter id="grain" x="0" y="0" width="100%" height="100%">
                <feTurbulence type="fractalNoise" baseFrequency="0.3" numOctaves="2" seed="4" />
                <feColorMatrix values="0 0 0 0 0  0 0 0 0 0  0 0 0 0 0  1.600 0 0 0 -0.550" />
              </filter>
              <rect width="100%" height="100%" filter="url(#grain)" />
            </Grain>
            <Title>It’s 65°F and Clear skies in San Luis Obispo.</Title>
          </Banner>
          <Summary>Patchy fog after 11pm. Mostly cloudy, with a low around 62. Northwest wind around 0 mph.</Summary>
          <ActionRow>
            <Action>Updated 03:49:12</Action>
            <Action>Next update -00:59:44</Action>
            <Action $clickable>Update now<RefreshIcon /></Action>
            <Action $clickable>Share this weather<LinkIcon /></Action>
          </ActionRow>
        </Hero>

        <ClockColumn>
          <ClockGrid>
            {"204928".split("").map((d, i) => <Digit key={i}>{d}</Digit>)}
          </ClockGrid>
          <DateBlock>
            WEDNESDAY<br />SEPTEMBER<br />24
          </DateBlock>
        </ClockColumn>

        <RadarPanel>
          <RadarHead>
            <RadarHeading>CURRENT RAIN RADAR</RadarHeading>
            <RadarLink>GO TO RADAR <ArrowIcon /></RadarLink>
          </RadarHead>
          <RadarMap />
        </RadarPanel>
      </TopRow>

      <LowerRow>
        <TilesColumn>
          <SectionLabel>Pinned Tiles</SectionLabel>
          <Tiles items={PINNED} pinned />
          <SectionLabel $spaced>All Tiles</SectionLabel>
          <Tiles items={ALL} />
        </TilesColumn>

        <ChartColumn>
          <TabGrid $row={114}>
            {METRICS.map((m, i) => <Tab key={m} $active={i === 0}>{m}</Tab>)}
          </TabGrid>
          <ChartFrame>
            <TemperatureChart />
          </ChartFrame>
          <TabGrid $row={120}>
            {["24h", "48h", "72h", "7 days"].map((t) => <Tab key={t} $centered $active={t === "48h"}>{t}</Tab>)}
          </TabGrid>
        </ChartColumn>
      </LowerRow>
    </Page>
  );
}
